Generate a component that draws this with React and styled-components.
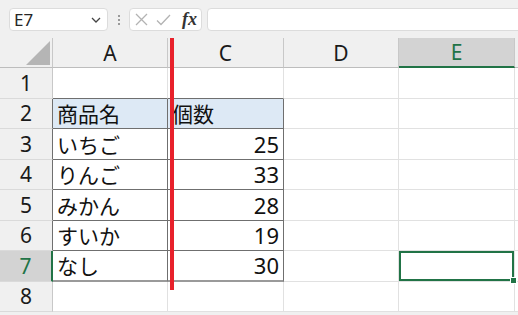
import styled, { createGlobalStyle } from 'styled-components';

const GlobalStyle = createGlobalStyle`
  body {
    margin: 0;
    background: #f0f0f0;
    overflow: hidden;
    font-family: 'Noto Sans', 'Noto Sans CJK JP', sans-serif;
  }
`;

const Page = styled.div`
  position: relative;
  width: 518px;
  height: 315px;
  overflow: hidden;
  background: #f0f0f0;
`;

const Toolbar = styled.div`
  display: flex;
  align-items: center;
  height: 23px;
  padding: 8px 0 7px 9px;
`;

const Box = styled.div`
  display: flex;
  align-items: center;
  height: 23px;
  box-sizing: border-box;
  background: #fff;
  border: 1px solid #dcdcdc;
  border-radius: 4px;
`;

const NameBox = styled(Box)`
  width: 99px;
  justify-content: space-between;
  padding: 0 6px 0 4px;
  font-size: 17px;
  color: #262626;
`;

const Grip = styled.div`
  display: flex;
  flex-direction: column;
  gap: 2px;
  margin: 0 9px 0 10px;
  span {
    width: 2px;
    height: 2px;
    background: #9a9a9a;
  }
`;

const FxBox = styled(Box)`
  width: 73px;
  gap: 8px;
  padding: 0 4px 0 5px;
  margin-right: 5px;
`;

const FxLabel = styled.span`
  font-family: 'Liberation Serif', serif;
  font-style: italic;
  font-weight: bold;
  font-size: 18px;
  color: #333;
  margin-left: 3px;
`;

const FormulaBar = styled(Box)`
  flex: 1;
  margin-right: -6px;
  border-radius: 4px 0 0 4px;
`;

const Sheet = styled.div`
  position: relative;
  display: grid;
  grid-template-columns: 53px 115px 116px 115px 116px 1fr;
  grid-template-rows: 30px repeat(8, 30.5px);
`;

const ColHead = styled.div`
  display: flex;
  align-items: center;
  justify-content: center;
  box-sizing: border-box;
  font-size: 21px;
  background: ${(p) => (p.$active ? '#d3d3d3' : '#f0f0f0')};
  color: ${(p) => (p.$active ? '#217346' : '#1a1a1a')};
  border-right: 1px solid #c8c8c8;
  border-bottom: ${(p) => (p.$active ? '2px solid #217346' : '1px solid #bdbdbd')};
`;

const Corner = styled(ColHead)`
  align-items: flex-end;
  justify-content: flex-end;
  padding: 0 2px 2px 0;
`;

const RowHead = styled.div`
  display: flex;
  align-items: center;
  justify-content: center;
  box-sizing: border-box;
  font-size: 21px;
  background: ${(p) => (p.$active ? '#d3d3d3' : '#f0f0f0')};
  color: ${(p) => (p.$active ? '#217346' : '#1a1a1a')};
  border-bottom: 1px solid #dadada;
  border-right: ${(p) =>
    p.$active ? '2px solid #217346' : `1px solid ${p.$edge ? '#6f6f6f' : '#c8c8c8'}`};
`;

const Cell = styled.div`
  position: relative;
  display: flex;
  align-items: center;
  justify-content: ${(p) => (p.$num ? 'flex-end' : 'flex-start')};
  box-sizing: border-box;
  padding: 0 4px 0 4px;
  font-family: 'Noto Sans', 'Noto Sans CJK JP', sans-serif;
  font-size: ${(p) => (p.$num ? '22px' : '21px')};
  color: #111;
  background: ${(p) => p.$bg || '#fff'};
  border-right: 1px solid ${(p) => p.$right || '#e1e1e1'};
  border-bottom: ${(p) => p.$bottom || '1px solid #e1e1e1'};
  ${(p) =>
    p.$selected &&
    `
    box-shadow: inset 0 0 0 2px #217346;
    &::after {
      content: '';
      position: absolute;
      right: -3px;
      bottom: -3px;
      width: 5px;
      height: 5px;
      background: #217346;
      border: 1px solid #fff;
      z-index: 2;
    }
  `}
`;

const HiddenMark = styled.div`
  position: absolute;
  left: 170px;
  top: 0;
  width: 4px;
  height: 252px;
  background: #e8212b;
  z-index: 3;
`;

const columns = ['A', 'C', 'D', 'E'];
const rows = [
  [null, null],
  ['商品名', '個数'],
  ['いちご', 25],
  ['りんご', 33],
  ['みかん', 28],
  ['すいか', 19],
  ['なし', 30],
  [null, null],
];

const DARK = '#6f6f6f';

const CrossIcon = () => (
  <svg width="13" height="13" viewBox="0 0 13 13">
    <path d="M1 1 L12 12 M12 1 L1 12" stroke="#b3b3b3" strokeWidth="1.3" fill="none" />
  </svg>
);

const CheckIcon = () => (
  <svg width="15" height="12" viewBox="0 0 15 12">
    <path d="M1 6.5 L5 10.5 L14 1" stroke="#b3b3b3" strokeWidth="1.3" fill="none" />
  </svg>
);

const Chevron = () => (
  <svg width="10" height="6" viewBox="0 0 10 6">
    <path d="M1 1 L5 5 L9 1" stroke="#444" strokeWidth="1.3" fill="none" />
  </svg>
);

const App = () => {
  return (
    <Page>
      <GlobalStyle />
      <Toolbar>
        <NameBox>
          <span>E7</span>
          <Chevron />
        </NameBox>
        <Grip>
          <span />
          <span />
          <span />
        </Grip>
        <FxBox>
          <CrossIcon />
          <CheckIcon />
          <FxLabel>fx</FxLabel>
        </FxBox>
        <FormulaBar />
      </Toolbar>
      <Sheet>
        <HiddenMark />
        <Corner>
          <svg width="24" height="24" viewBox="0 0 24 24">
            <polygon points="24,0 24,24 0,24" fill="#b5b5b5" />
          </svg>
        </Corner>
        {columns.map((c) => (
          <ColHead key={c} $active={c === 'E'}>
            {c}
          </ColHead>
        ))}
        <ColHead />
        {rows.map((r, i) => {
          const n = i + 1;
          const inTable = n >= 2 && n <= 7;
          const aboveTable = n === 1;
          const lastRow = n === 7;
          const tableBottom = lastRow
            ? '2px solid #9a9a9a'
            : inTable || aboveTable
            ? `1px solid ${DARK}`
            : undefined;
          const bg = n === 2 ? '#dde9f5' : undefined;
          return [
            <RowHead key={`h${n}`} $active={n === 7} $edge={inTable}>
              {n}
            </RowHead>,
            <Cell key={`a${n}`} $bg={bg} $right={inTable ? DARK : undefined} $bottom={tableBottom}>
              {r[0]}
            </Cell>,
            <Cell
              key={`c${n}`}
              $bg={bg}
              $num={typeof r[1] === 'number'}
              $right={inTable ? DARK : undefined}
              $bottom={tableBottom}
            >
              {r[1]}
            </Cell>,
            <Cell key={`d${n}`} />,
            <Cell key={`e${n}`} $selected={n === 7} />,
            <Cell key={`f${n}`} />,
          ];
        })}
      </Sheet>
    </Page>
  );
};

export default App;
